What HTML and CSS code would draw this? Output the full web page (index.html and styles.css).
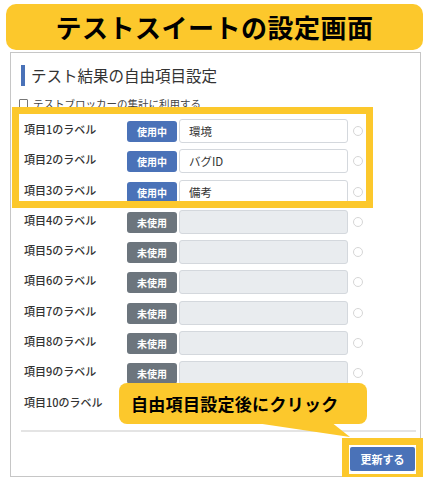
FILE: index.html
```html
<!DOCTYPE html>
<html lang="ja">
<head>
    <link rel="stylesheet" href="styles.css">
    <meta charset="utf-8" />
    <title>テストスイートの設定画面</title>
</head>
<body>

<div class="banner">テストスイートの設定画面</div>

<div class="panel">
    <h2 class="panel-title">テスト結果の自由項目設定</h2>

    <label class="check-row"><span class="check-box"></span>テストブロッカーの集計に利用する</label>

    <div class="field-list">
        <div class="field-row">
            <span class="field-label">項目1のラベル</span>
            <span class="badge badge-on">使用中</span>
            <input class="field-input" type="text" value="環境">
            <span class="radio"></span>
        </div>
        <div class="field-row">
            <span class="field-label">項目2のラベル</span>
            <span class="badge badge-on">使用中</span>
            <input class="field-input" type="text" value="バグID">
            <span class="radio"></span>
        </div>
        <div class="field-row">
            <span class="field-label">項目3のラベル</span>
            <span class="badge badge-on">使用中</span>
            <input class="field-input" type="text" value="備考">
            <span class="radio"></span>
        </div>
        <div class="field-row">
            <span class="field-label">項目4のラベル</span>
            <span class="badge badge-off">未使用</span>
            <input class="field-input" type="text" disabled>
            <span class="radio"></span>
        </div>
        <div class="field-row">
            <span class="field-label">項目5のラベル</span>
            <span class="badge badge-off">未使用</span>
            <input class="field-input" type="text" disabled>
            <span class="radio"></span>
        </div>
        <div class="field-row">
            <span class="field-label">項目6のラベル</span>
            <span class="badge badge-off">未使用</span>
            <input class="field-input" type="text" disabled>
            <span class="radio"></span>
        </div>
        <div class="field-row">
            <span class="field-label">項目7のラベル</span>
            <span class="badge badge-off">未使用</span>
            <input class="field-input" type="text" disabled>
            <span class="radio"></span>
        </div>
        <div class="field-row">
            <span class="field-label">項目8のラベル</span>
            <span class="badge badge-off">未使用</span>
            <input class="field-input" type="text" disabled>
            <span class="radio"></span>
        </div>
        <div class="field-row">
            <span class="field-label">項目9のラベル</span>
            <span class="badge badge-off">未使用</span>
            <input class="field-input" type="text" disabled>
            <span class="radio"></span>
        </div>
        <!-- row 10 controls sit under the callout -->
        <div class="field-row">
            <span class="field-label">項目10のラベル</span>
            <span class="badge badge-off covered">未使用</span>
            <input class="field-input covered" type="text" disabled>
            <span class="radio covered"></span>
        </div>
    </div>

    <hr class="divider">

    <div class="actions">
        <button class="btn-update" type="button">更新する</button>
    </div>
</div>

<!-- annotations over the screenshot -->
<div class="mark mark-fields"></div>
<div class="mark mark-button"></div>

<div class="callout">自由項目設定後にクリック</div>
<svg class="callout-tail" width="120" height="20" viewBox="0 0 120 20">
    <polygon points="0,0 82,0 101,15" fill="#fcc82c"/>
</svg>

</body>
</html>
```

FILE: styles.css
```css
body {
    margin: 0;
    font-family: "Noto Sans CJK JP", "Noto Sans", sans-serif;
    color: #333;
    background: #fff;
    position: relative;
}

.banner {
    margin: 4px 3px 0 6px;
    height: 46px;
    line-height: 46px;
    background: #fcc82c;
    border-radius: 10px;
    text-align: center;
    font-size: 26px;
    font-weight: bold;
    color: #000;
    letter-spacing: 0.5px;
}

.panel {
    margin: 2px 5px 0 10px;
    border: 1px solid #c6c6c6;
    padding: 12px 4px 5px 10px;
}

.panel-title {
    margin: 0;
    height: 21px;
    line-height: 21px;
    border-left: 4px solid #4a72b8;
    padding-left: 6px;
    font-size: 15.5px;
    font-weight: normal;
    color: #333;
}

.check-row {
    display: flex;
    align-items: center;
    margin-top: 10px;
    height: 14px;
    font-size: 10.5px;
    color: #444;
}

.check-box {
    width: 7px;
    height: 7px;
    border: 1px solid #777;
    border-radius: 1px;
    margin: 0 5px 0 -2px;
}

.field-list {
    margin-top: 9px;
    padding-left: 3px;
    display: flex;
    flex-direction: column;
    gap: 6.3px;
}

.field-row {
    display: flex;
    align-items: center;
    height: 24px;
}

.field-label {
    width: 103px;
    font-size: 11px;
    font-weight: 500;
    color: #333;
    margin-top: -4px;
}

.badge {
    width: 50px;
    height: 21px;
    line-height: 21px;
    border-radius: 3px;
    text-align: center;
    color: #fff;
    font-size: 10px;
    font-weight: bold;
    margin-right: 2px;
    margin-top: 1px;
}

.badge-on {
    background: #4a72b8;
}

.badge-off {
    background: #6c757d;
}

.field-input {
    box-sizing: border-box;
    width: 169px;
    height: 24px;
    margin: 0;
    padding: 0 9px;
    border: 1px solid #d4d8dd;
    border-radius: 3px;
    font-family: inherit;
    font-size: 11.5px;
    color: #333;
    background: #fff;
}

.field-input:disabled {
    background: #e9ecef;
}

.radio {
    width: 8px;
    height: 8px;
    border: 1px solid #d6d6d6;
    border-radius: 50%;
    margin-left: 5px;
}

.covered {
    visibility: hidden;
}

.divider {
    margin: 14px 0 0 0;
    border: 0;
    height: 2px;
    background: #e4e4e4;
}

.actions {
    display: flex;
    justify-content: flex-end;
    margin-top: 15px;
    padding-right: 1px;
}

.btn-update {
    width: 65px;
    height: 24px;
    border: 0;
    border-radius: 2px;
    background: #4a72b8;
    color: #fff;
    font-family: inherit;
    font-size: 11px;
    font-weight: bold;
}

/* yellow highlight frames */
.mark {
    position: absolute;
    box-sizing: border-box;
    border: 7px solid #fcc82c;
}

.mark-fields {
    left: 12px;
    top: 107px;
    width: 361px;
    height: 101px;
}

.mark-button {
    left: 342px;
    top: 438px;
    width: 81px;
    height: 43px;
}

.callout {
    position: absolute;
    left: 119px;
    top: 383px;
    width: 248px;
    height: 41px;
    line-height: 41px;
    border-radius: 8px;
    background: #fcc82c;
    padding-left: 12px;
    box-sizing: border-box;
    font-size: 17px;
    font-weight: bold;
    color: #000;
    letter-spacing: 0.3px;
}

.callout-tail {
    position: absolute;
    left: 249px;
    top: 422px;
}
```
